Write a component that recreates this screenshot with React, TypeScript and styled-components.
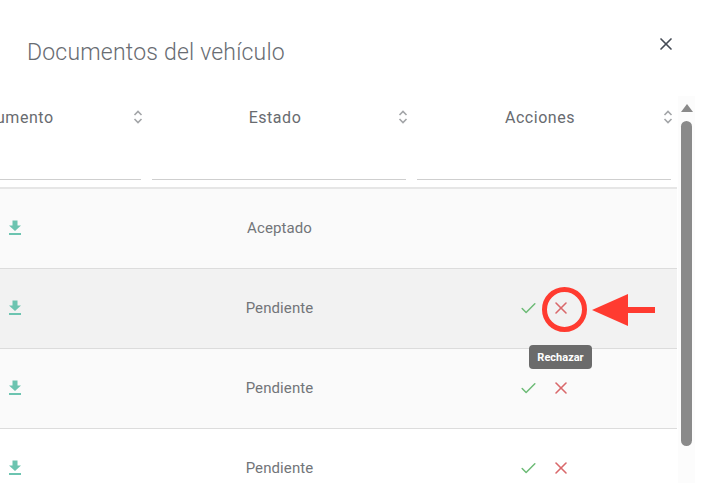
import React from "react";
import styled, { createGlobalStyle } from "styled-components";
import { Check, X } from "lucide-react";

const GlobalStyle = createGlobalStyle`
  html, body {
    margin: 0;
    padding: 0;
    background: #ffffff;
    overflow: hidden;
  }
  * {
    box-sizing: border-box;
  }
`;

const Page = styled.div`
  position: relative;
  width: 711px;
  height: 483px;
  overflow: hidden;
  font-family: Roboto, "Liberation Sans", sans-serif;
  color: #5c5f63;
`;

const Header = styled.header`
  height: 96px;
  padding: 34px 35px 0 27px;
  display: flex;
  justify-content: space-between;
  align-items: flex-start;
`;

const Title = styled.h1`
  margin: 3px 0 0;
  font-size: 23px;
  line-height: 31px;
  font-weight: 300;
  letter-spacing: 0.2px;
  color: #686c72;
`;

const CloseButton = styled.button`
  border: 0;
  padding: 0;
  background: none;
  color: #454b55;
  display: flex;
  width: 20px;
  height: 20px;
`;

const Body = styled.div`
  display: flex;
  height: 387px;
`;

const TableClip = styled.div`
  width: 677px;
  flex-shrink: 0;
  overflow: hidden;
`;

const Table = styled.div`
  width: 795px;
  margin-left: -118px;
`;

const Row = styled.div<{ $bg?: string }>`
  display: grid;
  grid-template-columns: repeat(3, 265px);
  background: ${(p) => p.$bg || "transparent"};
`;

const HeadCell = styled.div`
  height: 42px;
  padding: 0 4px 0 5px;
  display: flex;
  align-items: center;
`;

const HeadLabel = styled.span`
  flex: 1;
  text-align: center;
  font-size: 16px;
  font-weight: 400;
  letter-spacing: 0.55px;
  color: #686b70;
`;

const FilterRow = styled(Row)`
  height: 51px;
  border-bottom: 2px solid #e6e6e6;
`;

const FilterCell = styled.div`
  padding: 0 6px 0 5px;
`;

const FilterLine = styled.div`
  height: 42px;
  border-bottom: 1px solid #cfcfcf;
`;

const DataRow = styled(Row)`
  height: 80px;
  border-bottom: 1px solid #dcdcdc;
`;

const Cell = styled.div`
  display: flex;
  justify-content: center;
  align-items: center;
  gap: 13px;
  font-size: 15px;
  letter-spacing: 0.1px;
  color: #727579;
  padding-bottom: 1px;
`;

const IconButton = styled.span<{ $color: string }>`
  display: flex;
  color: ${(p) => p.$color};
`;

const Rail = styled.div`
  width: 17px;
  margin-left: 1px;
  background: #fcfcfc;
  padding-top: 8px;
  display: flex;
  flex-direction: column;
  align-items: center;
`;

const RailArrow = styled.div`
  width: 0;
  height: 0;
  border-left: 6px solid transparent;
  border-right: 6px solid transparent;
  border-bottom: 8px solid #8a8a8a;
`;

const RailThumb = styled.div`
  width: 11px;
  height: 325px;
  margin-top: 9px;
  background: #8a8a8a;
  border-radius: 6px;
`;

const Tooltip = styled.div`
  position: absolute;
  left: 529px;
  top: 345px;
  width: 63px;
  height: 24px;
  border-radius: 4px;
  background: #6b6b6b;
  color: #ffffff;
  font-size: 11px;
  font-weight: 700;
  display: flex;
  justify-content: center;
  align-items: center;
`;

const Ring = styled.div`
  position: absolute;
  left: 542px;
  top: 287px;
  width: 45px;
  height: 45px;
  border: 5px solid #ff3b30;
  border-radius: 50%;
`;

const Arrow = styled.svg`
  position: absolute;
  left: 590px;
  top: 292px;
`;

const SortIcon = () => (
  <svg width="10" height="16" viewBox="0 0 10 16" fill="none" stroke="#a3a5a8" strokeWidth="1.6">
    <path d="M1.5 6 L5 2.5 L8.5 6" />
    <path d="M1.5 10 L5 13.5 L8.5 10" />
  </svg>
);

const DownloadIcon = () => (
  <svg width="14" height="16" viewBox="0 0 14 16" fill="#6cc4b0">
    <path d="M4.5 0.5 H9.5 V5.5 H13 L7 11 L1 5.5 H4.5 Z" />
    <rect x="1" y="13" width="12" height="2" />
  </svg>
);

const rows = [
  { estado: "Aceptado", bg: "#fafafa", actions: false },
  { estado: "Pendiente", bg: "#f2f2f2", actions: true },
  { estado: "Pendiente", bg: "#fafafa", actions: true },
  { estado: "Pendiente", bg: "#ffffff", actions: true },
];

const columns = ["Documento", "Estado", "Acciones"];

export default function App() {
  return (
    <Page>
      <GlobalStyle />
      <Header>
        <Title>Documentos del vehículo</Title>
        <CloseButton aria-label="Cerrar">
          <X size={20} strokeWidth={2} />
        </CloseButton>
      </Header>
      <Body>
        <TableClip>
          <Table>
            <Row>
              {columns.map((c) => (
                <HeadCell key={c}>
                  <HeadLabel>{c}</HeadLabel>
                  <SortIcon />
                </HeadCell>
              ))}
            </Row>
            <FilterRow>
              {columns.map((c) => (
                <FilterCell key={c}>
                  <FilterLine />
                </FilterCell>
              ))}
            </FilterRow>
            {rows.map((r, i) => (
              <DataRow key={i} $bg={r.bg}>
                <Cell>
                  <DownloadIcon />
                </Cell>
                <Cell>{r.estado}</Cell>
                <Cell>
                  {r.actions && (
                    <>
                      <IconButton $color="#6dbb76">
                        <Check size={19} strokeWidth={1.9} />
                      </IconButton>
                      <IconButton $color="#d9686b">
                        <X size={20} strokeWidth={1.9} />
                      </IconButton>
                    </>
                  )}
                </Cell>
              </DataRow>
            ))}
          </Table>
        </TableClip>
        <Rail>
          <RailArrow />
          <RailThumb />
        </Rail>
      </Body>
      <Ring />
      <Arrow width="68" height="36" viewBox="0 0 68 36">
        <path d="M2 18 L38 2 V15 H65 V21 H38 V34 Z" fill="#ff3b30" />
      </Arrow>
      <Tooltip>Rechazar</Tooltip>
    </Page>
  );
}
